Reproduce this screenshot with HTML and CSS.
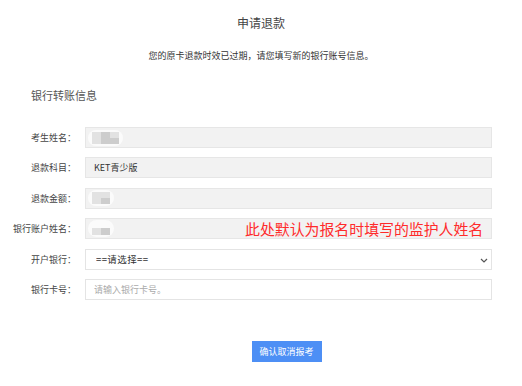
FILE: index.html
```html
<!DOCTYPE html>
<html lang="zh">
<head>
    <meta charset="UTF-8">
    <meta name="viewport" content="width=device-width, initial-scale=1.0">
    <title>申请退款</title>
    <link rel="stylesheet" href="styles.css">
</head>
<body>
    <div class="page">
        <h1 class="title">申请退款</h1>
        <p class="notice">您的原卡退款时效已过期，请您填写新的银行账号信息。</p>

        <h2 class="section-title">银行转账信息</h2>

        <form class="form">
            <div class="row">
                <label class="label">考生姓名：</label>
                <div class="field readonly">
                    <span class="mosaic mosaic-wide">
                        <i></i><i class="dark"></i><i></i>
                        <i></i><i class="dark"></i><i class="dark"></i>
                    </span>
                </div>
            </div>
            <div class="row">
                <label class="label">退款科目：</label>
                <div class="field readonly">KET青少版</div>
            </div>
            <div class="row">
                <label class="label">退款金额：</label>
                <div class="field readonly">
                    <span class="mosaic">
                        <i></i><i></i>
                        <i></i><i class="dark"></i>
                    </span>
                </div>
            </div>
            <div class="row">
                <label class="label">银行账户姓名：</label>
                <div class="field readonly">
                    <span class="mosaic mosaic-low">
                        <i></i><i class="dark"></i>
                    </span>
                    <span class="tip">此处默认为报名时填写的监护人姓名</span>
                </div>
            </div>
            <div class="row">
                <label class="label">开户银行：</label>
                <div class="field select-wrap">
                    <select class="select">
                        <option>==请选择==</option>
                    </select>
                    <svg class="chevron" width="8" height="5" viewBox="0 0 8 5">
                        <path d="M1 1l3 3 3-3" fill="none" stroke="#555" stroke-width="1.2"/>
                    </svg>
                </div>
            </div>
            <div class="row">
                <label class="label">银行卡号：</label>
                <input class="field input" type="text" placeholder="请输入银行卡号。">
            </div>

            <div class="actions">
                <button type="button" class="submit">确认取消报考</button>
            </div>
        </form>
    </div>
</body>
</html>
```

FILE: styles.css
```css
/* 全局样式 */
body {
    margin: 0;
    background: #ffffff;
    font-family: "Noto Sans CJK SC", "Noto Sans", sans-serif;
    color: #333333;
}

.page {
    width: 522px;
    padding-top: 15px;
}

/* 标题 */
.title {
    margin: 0;
    text-align: center;
    font-size: 12px;
    line-height: 16px;
    font-weight: normal;
    color: #444444;
}

.notice {
    margin: 19px 0 0;
    text-align: center;
    font-size: 9px;
    line-height: 12px;
    color: #333333;
}

.section-title {
    margin: 26px 0 0 31px;
    font-size: 11px;
    line-height: 14px;
    font-weight: normal;
    color: #555555;
}

/* 表单 */
.form {
    display: flex;
    flex-direction: column;
    gap: 9.4px;
    margin-top: 25px;
}

.row {
    display: flex;
    align-items: center;
    height: 21px;
}

.label {
    width: 76px;
    box-sizing: border-box;
    text-align: right;
    font-size: 9px;
    color: #444444;
    white-space: nowrap;
    flex: none;
    margin-right: 9px;
}

.field {
    position: relative;
    width: 407px;
    height: 21px;
    box-sizing: border-box;
    border: 1px solid #e4e4e4;
    display: flex;
    align-items: center;
    padding-left: 8px;
    font-size: 9px;
    color: #333333;
    background: #ffffff;
}

.readonly {
    background: #f2f2f2;
    border-color: #e6e6e6;
}

/* 打码区域 */
.mosaic {
    display: grid;
    grid-template-columns: repeat(2, 9px);
    grid-auto-rows: 6px;
    padding: 2px 4px;
    margin-left: -6px;
    background: #fbfbfb;
    border-radius: 10px;
    filter: blur(0.6px);
}

.mosaic-wide {
    grid-template-columns: repeat(3, 9px);
}

.mosaic-low {
    grid-auto-rows: 7px;
    padding-top: 8px;
}

.mosaic i {
    background: #e2e2e2;
}

.mosaic i.dark {
    background: #cdcdcd;
}

.tip {
    position: absolute;
    left: 159px;
    top: 0;
    line-height: 20px;
    font-size: 14.9px;
    color: #ff2b2b;
    white-space: nowrap;
}

/* 下拉框 */
.select-wrap {
    padding-left: 0;
}

.select {
    appearance: none;
    -webkit-appearance: none;
    border: none;
    outline: none;
    background: transparent;
    width: 100%;
    height: 100%;
    padding-left: 10px;
    font-family: inherit;
    font-size: 9.5px;
    letter-spacing: 0.4px;
    color: #333333;
}

.chevron {
    position: absolute;
    right: 3px;
    top: 8px;
}

/* 输入框 */
.input {
    outline: none;
    font-family: inherit;
}

.input::placeholder {
    color: #aaaaaa;
}

/* 按钮 */
.actions {
    display: flex;
    justify-content: center;
    padding-left: 81px;
    padding-right: 30px;
    margin-top: 32px;
}

.submit {
    width: 70px;
    height: 21px;
    border: none;
    background: #4d8ff5;
    color: #ffffff;
    font-family: inherit;
    font-size: 9px;
    padding: 0;
    cursor: pointer;
}
```
